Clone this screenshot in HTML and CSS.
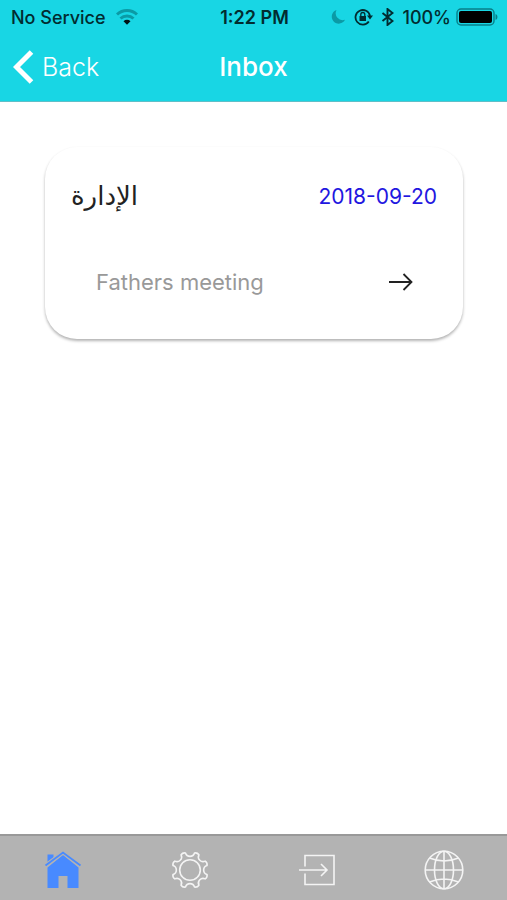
FILE: index.html
```html
<!DOCTYPE html>
<html lang="en">
<head>
    <meta charset="UTF-8">
    <meta name="viewport" content="width=device-width, initial-scale=1.0">
    <title>Inbox</title>
    <link rel="stylesheet" href="styles.css">
</head>
<body>
    <header class="header">
        <div class="status-bar">
            <div class="status-left">
                <span>No Service</span>
                <svg width="22" height="16" viewBox="0 0 22 16" fill="none" stroke-width="3">
                    <path d="M1 5.5a14.5 14.5 0 0 1 20 0" stroke="#0b9aa5"/>
                    <path d="M4.5 9.5a9.5 9.5 0 0 1 13 0" stroke="#0b9aa5"/>
                    <path d="M7.5 12.2a5 5 0 0 1 7 0L11 15.7z" fill="#001214"/>
                </svg>
            </div>
            <span class="clock">1:22 PM</span>
            <div class="status-right">
                <svg width="15" height="16" viewBox="0 0 15 16">
                    <path d="M5.5 1A7 7 0 1 0 14 10.8A7 7 0 0 1 5.5 1z" fill="#0b9aa5"/>
                </svg>
                <svg width="19" height="18" viewBox="0 0 19 18">
                    <path d="M14.8 13.5A7.3 7.3 0 1 1 16 8" fill="none" stroke="#022c30" stroke-width="1.8"/>
                    <path d="M13 7.5h6l-3 4z" fill="#022c30"/>
                    <rect x="5.5" y="8" width="6.5" height="5" fill="#022c30"/>
                    <path d="M6.8 8V6.5a2 2 0 0 1 4 0V8" fill="none" stroke="#022c30" stroke-width="1.3"/>
                </svg>
                <svg width="13" height="18" viewBox="0 0 13 18">
                    <path d="M1.5 5l10 8-5 4V1l5 4-10 8" fill="none" stroke="#022c30" stroke-width="1.9"/>
                </svg>
                <span class="percent">100%</span>
                <svg width="42" height="18" viewBox="0 0 42 18">
                    <rect x="1" y="1" width="37" height="16" rx="4" fill="none" stroke="#087f88" stroke-width="1.4"/>
                    <rect x="3" y="3" width="33" height="12" rx="2" fill="#000"/>
                    <path d="M39.5 6q2 .5 2 3t-2 3z" fill="#087f88"/>
                </svg>
            </div>
        </div>
        <nav class="nav-bar">
            <button class="back">
                <svg width="21" height="34" viewBox="0 0 21 34">
                    <path d="M18.5 2L3.5 17l15 15" fill="none" stroke="#fff" stroke-width="5"/>
                </svg>
                Back
            </button>
            <h1>Inbox</h1>
        </nav>
    </header>

    <main class="content">
        <article class="card">
            <div class="card-head">
                <h2 lang="ar" dir="rtl">الإدارة</h2>
                <time datetime="2018-09-20">2018-09-20</time>
            </div>
            <a class="card-item" href="#">
                <span>Fathers meeting</span>
                <svg width="24" height="18" viewBox="0 0 24 18">
                    <path d="M0 9h22M14.5 1l8 8-8 8" fill="none" stroke="#222" stroke-width="1.8"/>
                </svg>
            </a>
        </article>
    </main>

    <footer class="tabs">
        <a href="#" aria-label="Home">
            <svg width="40" height="40" viewBox="-20 -20 40 40" fill="#488aff">
                <path d="M-15.500-15.500h6v5l-6 5.500z"/>
                <path d="M-15.500-2.500L0-15 15.500-2.500V18H4.500V6h-9v12h-11z"/>
                <path d="M-17.500-4.500L0-17.500 17.500-4.500" fill="none" stroke="#b3b3b3" stroke-width="4"/>
                <path d="M-17.500-4.500L0-17.500 17.500-4.500" fill="none" stroke="#488aff" stroke-width="1.8"/>
            </svg>
        </a>
        <a href="#" aria-label="Settings">
            <svg width="40" height="40" viewBox="-20 -20 40 40" fill="none" stroke="#f4f4f4" stroke-width="1.6">
                <circle r="10.3"/>
                <path stroke-linejoin="round" d="M17-4.5A4.7 4.7 0 0 0 17 4.5Q17.6 7.3 15.2 8.9A4.7 4.7 0 0 0 8.9 15.2Q7.3 17.6 4.5 17A4.7 4.7 0 0 0-4.5 17Q-7.3 17.6-8.9 15.2A4.7 4.7 0 0 0-15.2 8.9Q-17.6 7.3-17 4.5A4.7 4.7 0 0 0-17-4.5Q-17.6-7.3-15.2-8.9A4.7 4.7 0 0 0-8.9-15.2Q-7.3-17.6-4.5-17A4.7 4.7 0 0 0 4.5-17Q7.3-17.6 8.9-15.2A4.7 4.7 0 0 0 15.2-8.9Q17.6-7.3 17-4.5z"/>
            </svg>
        </a>
        <a href="#" aria-label="Log in">
            <svg width="40" height="40" viewBox="-20 -20 40 40" fill="none" stroke="#f4f4f4" stroke-width="1.6">
                <path d="M-12-3.500V-14.500h29v29h-29V3.500"/>
                <path d="M-18 0h28M4-6L10 0 4 6"/>
            </svg>
        </a>
        <a href="#" aria-label="Language">
            <svg width="40" height="40" viewBox="-20 -20 40 40" fill="none" stroke="#f4f4f4" stroke-width="1.6">
                <circle r="18.8"/>
                <ellipse rx="9.5" ry="18.8"/>
                <path d="M0-19v38M-19 0h38M-14.500-12q14.500 6 29 0M-14.500 12q14.500-6 29 0"/>
            </svg>
        </a>
    </footer>
</body>
</html>
```
FILE: styles.css
```css
* {
    box-sizing: border-box;
}

body {
    margin: 0;
    min-height: 100vh;
    display: flex;
    flex-direction: column;
    background: #fff;
    font-family: Inter, Roboto, sans-serif;
}

.header {
    background: #18d6e4;
    border-bottom: 1px solid #5fbfc8;
}

.status-bar {
    display: grid;
    grid-template-columns: 1fr auto 1fr;
    align-items: center;
    height: 34px;
    padding: 0 9px 0 11px;
    font-size: 18px;
    font-weight: 500;
    color: #022c30;
}

.status-left,
.status-right {
    display: flex;
    align-items: center;
    gap: 10px;
}

.status-right {
    justify-content: flex-end;
    gap: 8px;
}

.percent {
    margin-right: -3px;
}

.clock {
    font-weight: 600;
}

.nav-bar {
    display: grid;
    grid-template-columns: 1fr auto 1fr;
    align-items: center;
    height: 67px;
    padding: 0 13px 2px;
    color: #fff;
}

.back {
    display: flex;
    align-items: center;
    gap: 8px;
    padding: 0;
    border: none;
    background: none;
    color: #fff;
    font-family: inherit;
    font-size: 25px;
    font-weight: 300;
    cursor: pointer;
}

.nav-bar h1 {
    margin: 0;
    font-size: 26px;
    font-weight: 500;
}

.content {
    flex: 1;
    padding: 45px 44px 45px 45px;
}

.card {
    padding: 22px 26px 32px;
    border-radius: 32px;
    background: #fff;
    box-shadow: 0 2px 3px rgba(0, 0, 0, 0.3);
}

.card-head {
    display: flex;
    justify-content: space-between;
    align-items: center;
    height: 54px;
}

.card-head h2 {
    margin: 0;
    font-family: "DejaVu Sans", sans-serif;
    font-size: 26px;
    font-weight: 400;
    color: #222;
}

.card-head time {
    font-size: 21px;
    color: #2216e0;
}

.card-item {
    display: flex;
    justify-content: space-between;
    align-items: center;
    height: 50px;
    margin-top: 34px;
    padding: 0 24px 0 25px;
    font-size: 22px;
    color: #999;
    text-decoration: none;
}

.tabs {
    display: grid;
    grid-template-columns: repeat(4, 1fr);
    height: 66px;
    padding-top: 3px;
    background: #b3b3b3;
    border-top: 2px solid #999;
}

.tabs a {
    display: flex;
    justify-content: center;
    align-items: center;
}
```
